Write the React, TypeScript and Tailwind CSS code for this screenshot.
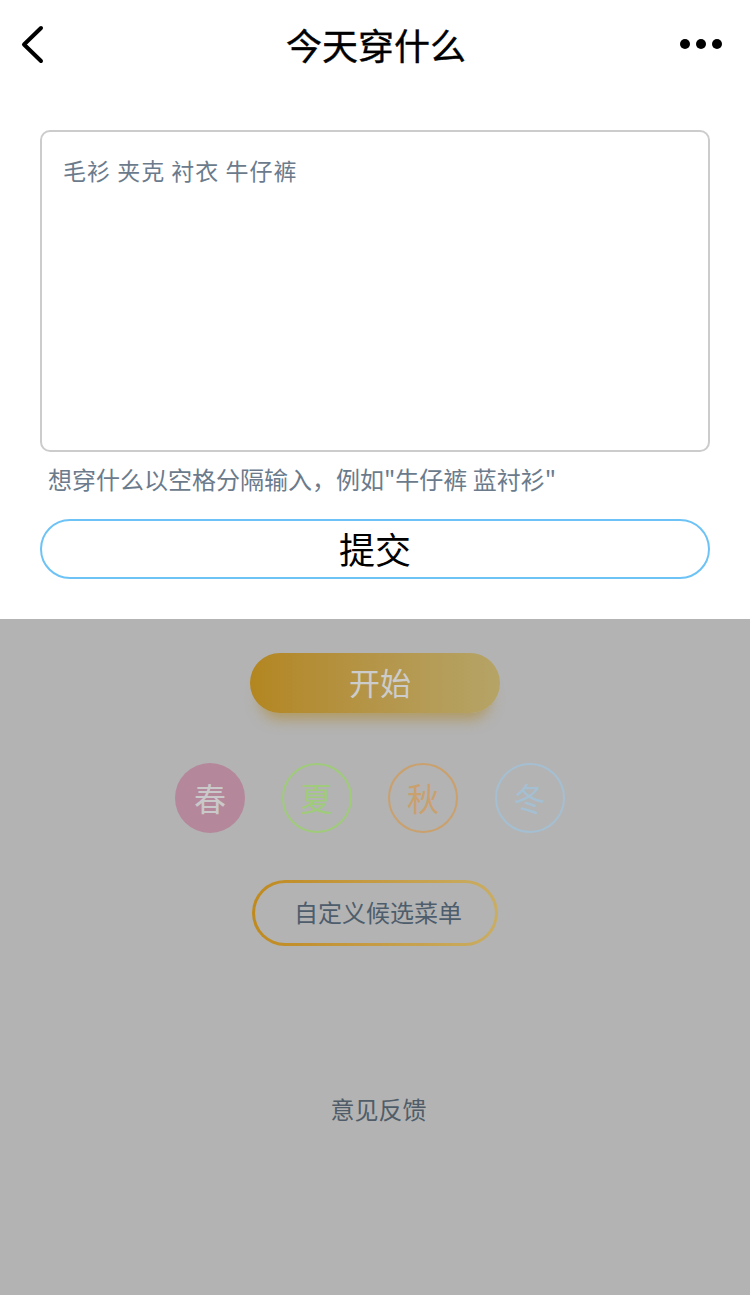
import React from "react";

export default function App() {
  const font = { fontFamily: '"Noto Sans CJK SC", "Noto Sans", sans-serif' };
  return (
    <div
      className="w-[750px] h-[1295px] bg-[#b3b3b3] overflow-hidden flex flex-col"
      style={font}
    >
      <div className="bg-white h-[619px] flex flex-col">
        <div className="h-[88px] flex items-center justify-between relative">
          <div className="w-[80px] pl-[20px] flex items-center">
            <svg width="26" height="40" viewBox="0 0 26 40">
              <path
                d="M21 4 L4 20.5 L21 37"
                fill="none"
                stroke="#000"
                strokeWidth="4"
                strokeLinecap="round"
                strokeLinejoin="round"
              />
            </svg>
          </div>
          <div className="text-[36px] leading-none text-black pl-[2px] [-webkit-text-stroke:0.4px_black]">今天穿什么</div>
          <div className="w-[80px] flex items-center justify-end pr-[28px] gap-[6px]">
            <span className="w-[10px] h-[10px] rounded-full bg-black" />
            <span className="w-[10px] h-[10px] rounded-full bg-black" />
            <span className="w-[10px] h-[10px] rounded-full bg-black" />
          </div>
        </div>
        <div className="mt-[42px] mx-[40px]">
          <textarea
            readOnly
            placeholder="毛衫 夹克 衬衣 牛仔裤"
            className="block w-full h-[322px] resize-none border-2 border-[#cccccc] rounded-[10px] px-[21px] py-[22px] text-[23px] tracking-[1px] leading-[32px] outline-none placeholder:text-[#6b7b8c] text-[#333]"
            style={font}
          />
        </div>
        <div className="ml-[48px] mt-[9px] h-[36px] text-[24px] leading-[36px] text-[#6b7b8c]">
          想穿什么以空格分隔输入，例如"牛仔裤 蓝衬衫"
        </div>
        <div className="mx-[40px] mt-[22px] h-[60px] border-2 border-[#6ec3f6] rounded-full flex items-center justify-center text-[36px] leading-none text-black">
          <span className="-mt-[3px]">提交</span>
        </div>
      </div>

      <div className="flex flex-col items-center">
        <div className="mt-[34px] w-[250px] h-[60px] rounded-full bg-gradient-to-r from-[#b3861f] to-[#b5a467] flex items-center justify-center text-[31px] leading-none text-[#cccccc] shadow-[0_16px_14px_-10px_rgba(175,135,40,0.6)]">
          <span className="pl-[10px] -mt-[4px]">开始</span>
        </div>

        <div className="mt-[50px] self-start ml-[175px] flex gap-[36.5px]">
          <div className="w-[70px] h-[70px] rounded-full bg-[#b5879b] flex items-center justify-center text-[32px] leading-none text-[#c9c9c9]">
            <span className="-mt-[3px]">春</span>
          </div>
          <div className="w-[70px] h-[70px] rounded-full border-2 border-[#9fcb7a] flex items-center justify-center text-[32px] leading-none text-[#9fcb7a]">
            <span className="-mt-[3px]">夏</span>
          </div>
          <div className="w-[70px] h-[70px] rounded-full border-2 border-[#caa06d] flex items-center justify-center text-[32px] leading-none text-[#caa06d]">
            <span className="-mt-[3px]">秋</span>
          </div>
          <div className="w-[70px] h-[70px] rounded-full border-2 border-[#a5bfd2] flex items-center justify-center text-[32px] leading-none text-[#a5bfd2]">
            <span className="-mt-[3px]">冬</span>
          </div>
        </div>

        <div className="mt-[47px] w-[246px] h-[66px] rounded-full p-[3px] bg-gradient-to-r from-[#c08a1c] to-[#c9ad62]">
          <div className="w-full h-full rounded-full bg-[#b3b3b3] flex items-center justify-center text-[24px] leading-none text-[#4e5d6c]">
            <span className="pl-[6px] -mt-[2px]">自定义候选菜单</span>
          </div>
        </div>

        <div className="mt-[146px] h-[34px] text-[24px] leading-[34px] text-[#505c68] pl-[7px]">
          意见反馈
        </div>
      </div>
    </div>
  );
}
